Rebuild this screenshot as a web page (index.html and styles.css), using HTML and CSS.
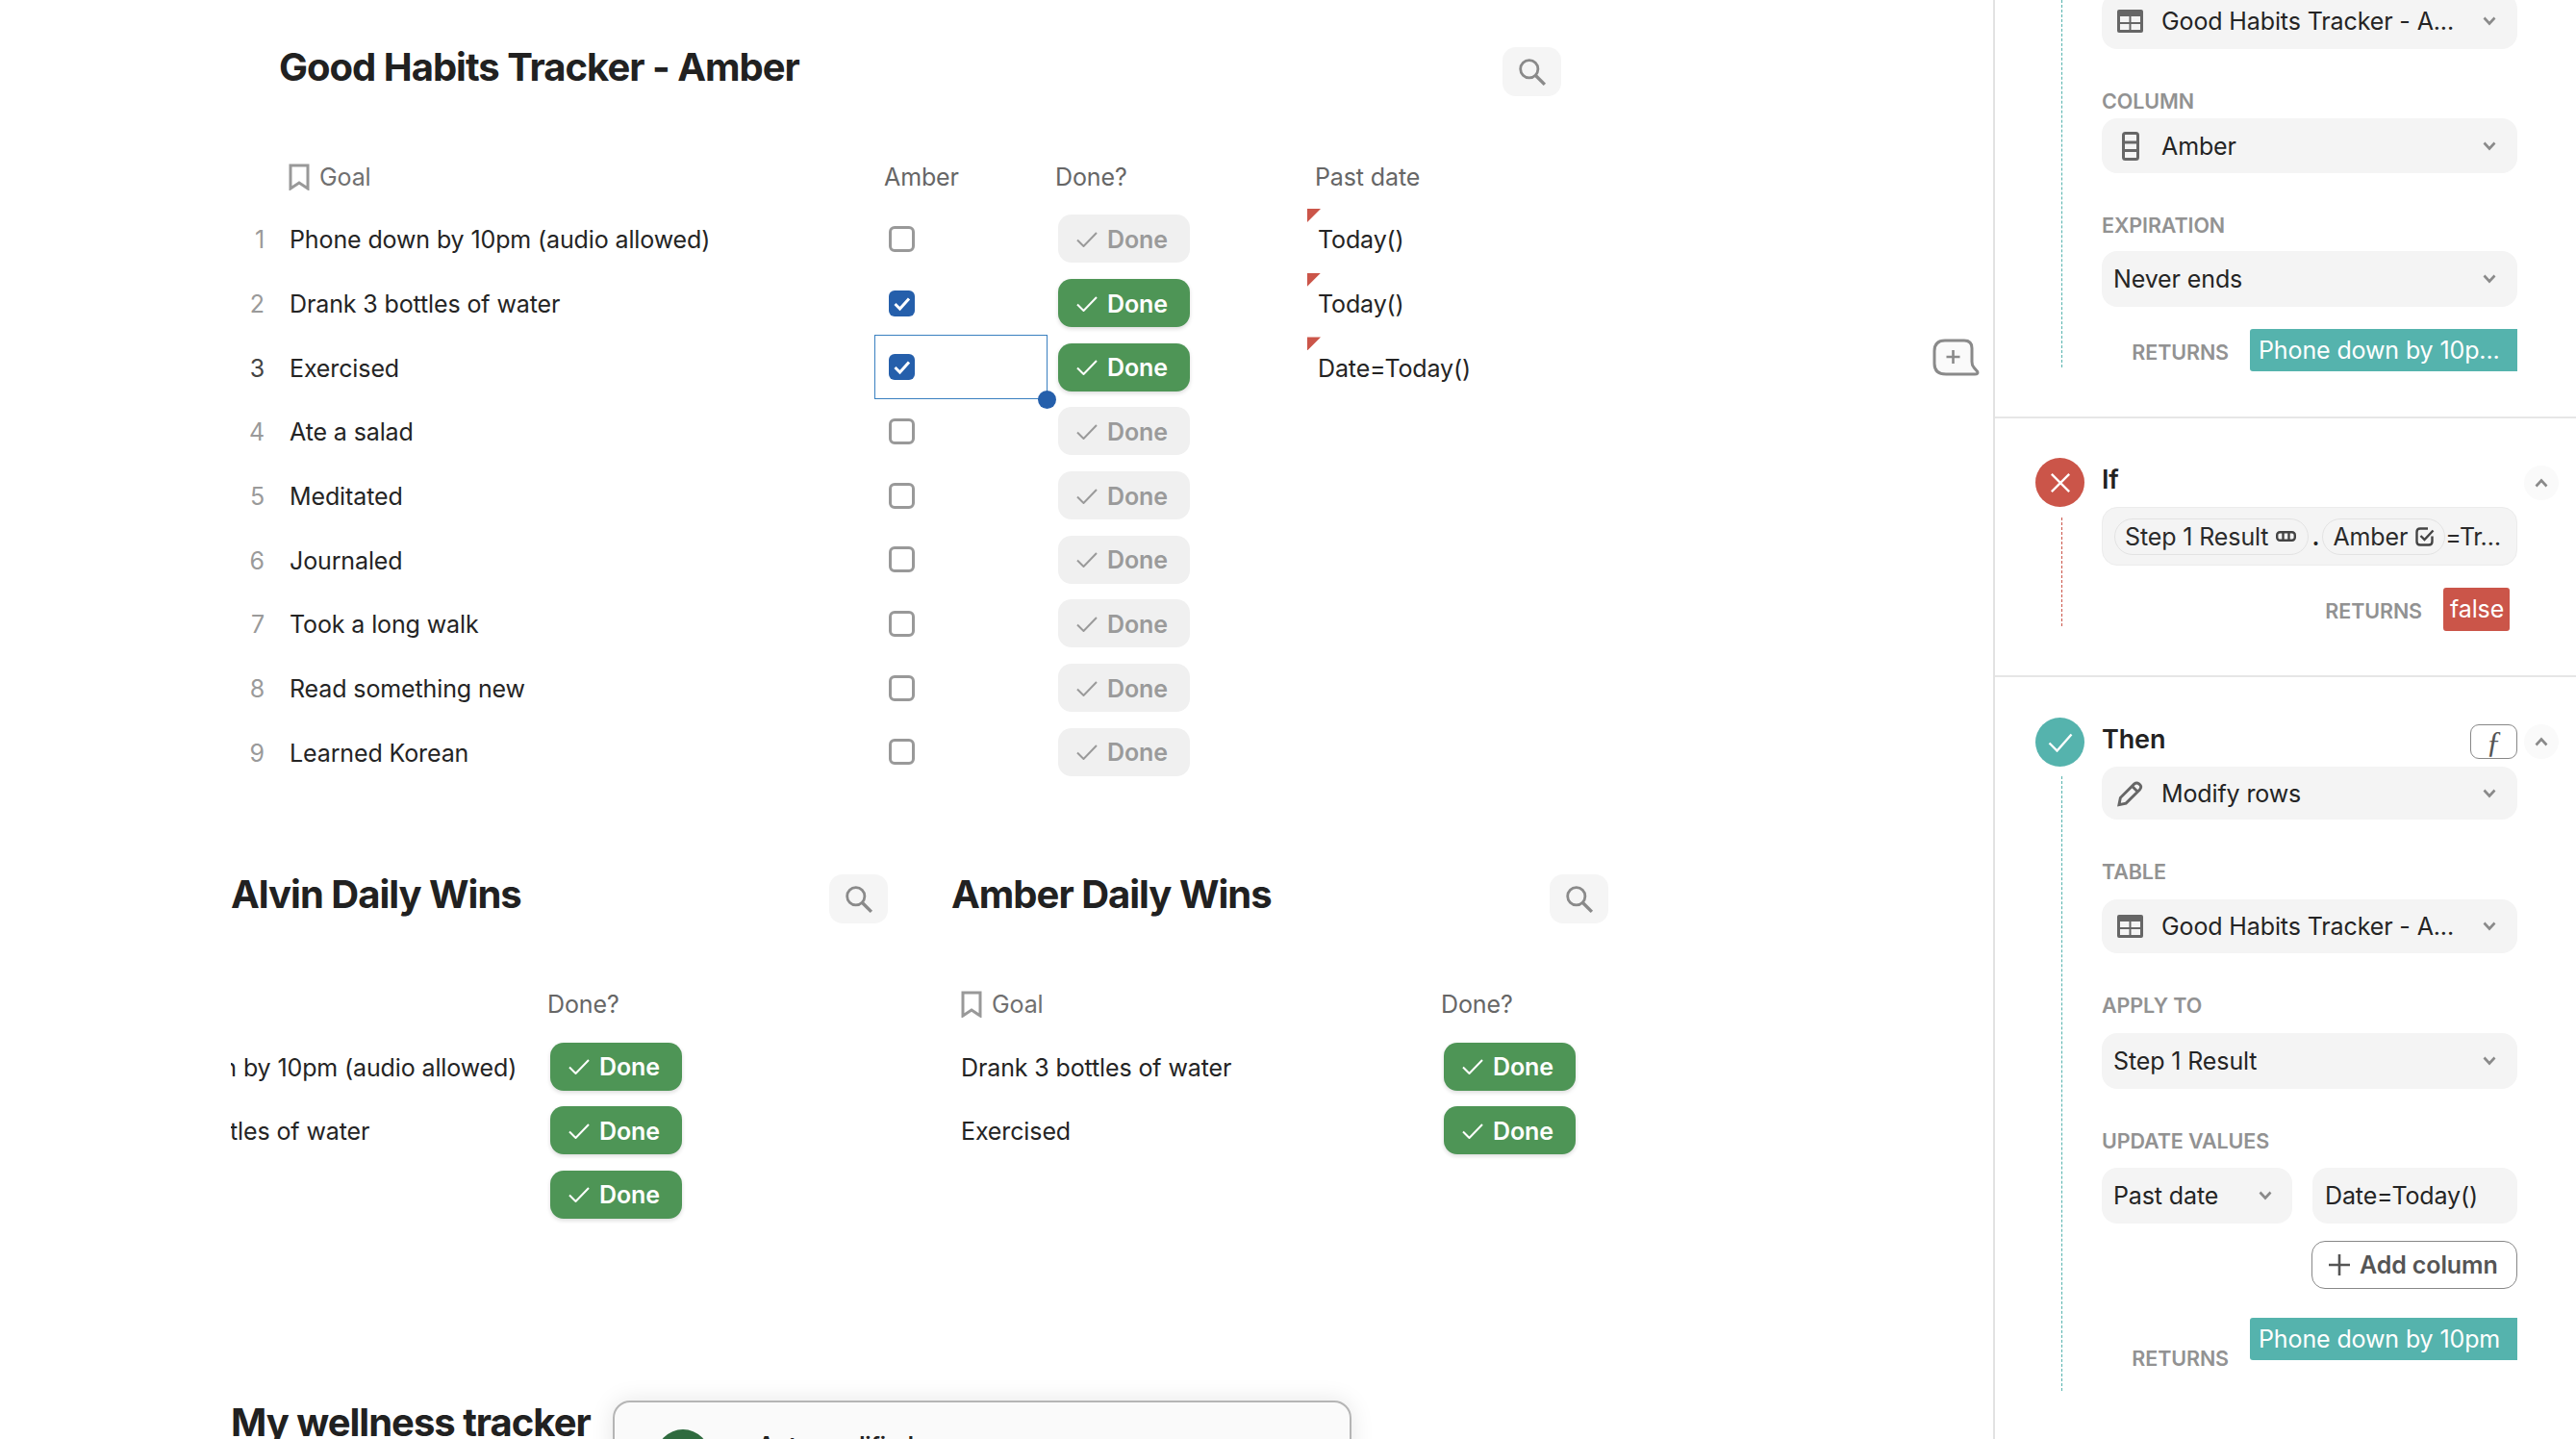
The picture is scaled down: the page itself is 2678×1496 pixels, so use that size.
FILE: index.html
```html
<!DOCTYPE html>
<html lang="en">
<head>
<meta charset="utf-8">
<title>Good Habits Tracker</title>
<link rel="stylesheet" href="styles.css">
</head>
<body>
<svg class="defs" width="0" height="0" aria-hidden="true">
  <symbol id="i-check" viewBox="0 0 22 16"><path d="M1 8.5 L7.5 15 L21 1" fill="none" stroke="currentColor" stroke-width="2"/></symbol>
  <symbol id="i-search" viewBox="0 0 28 28"><circle cx="11" cy="11" r="8.500" fill="none" stroke="currentColor" stroke-width="2.600"/><path d="M17 17 L26 26" stroke="currentColor" stroke-width="3.200"/></symbol>
  <symbol id="i-bookmark" viewBox="0 0 22 28"><path d="M2 2 H20 V26 L11 20 L2 26 Z" fill="none" stroke="currentColor" stroke-width="3"/></symbol>
  <symbol id="i-box" viewBox="0 0 27 27"><path d="M6.500 14 L11.500 19 L21 8.500" fill="none" stroke="#fff" stroke-width="3"/></symbol>
  <symbol id="i-chev" viewBox="0 0 14 10"><path d="M1.500 1.500 L7 7.500 L12.500 1.500" fill="none" stroke="currentColor" stroke-width="2.600"/></symbol>
  <symbol id="i-up" viewBox="0 0 14 10"><path d="M1.500 8.500 L7 2.500 L12.500 8.500" fill="none" stroke="currentColor" stroke-width="2.600"/></symbol>
  <symbol id="i-table" viewBox="0 0 27 24"><rect x="0" y="0" width="27" height="24" rx="2" fill="currentColor"/><rect x="3" y="7" width="9.500" height="6" fill="#f4f4f4"/><rect x="14.500" y="7" width="9.500" height="6" fill="#f4f4f4"/><rect x="3" y="15" width="9.500" height="6" fill="#f4f4f4"/><rect x="14.500" y="15" width="9.500" height="6" fill="#f4f4f4"/></symbol>
  <symbol id="i-column" viewBox="0 0 18 30"><rect x="1.500" y="1.500" width="15" height="27" rx="2" fill="none" stroke="currentColor" stroke-width="3"/><path d="M1.500 11 H16.500 M1.500 19.500 H16.500" stroke="currentColor" stroke-width="3"/></symbol>
  <symbol id="i-pencil" viewBox="0 0 28 28"><path d="M2 26 L3.500 18.500 L18.500 3.500 Q21 1.500 23.500 3.500 L25 5 Q26.500 7 24.500 9.500 L9.500 24.500 Z M16 6 L22 12" fill="none" stroke="currentColor" stroke-width="3"/></symbol>
  <symbol id="i-link" viewBox="0 0 21 11"><rect x="1.200" y="1.200" width="18.600" height="8.600" rx="3" fill="none" stroke="currentColor" stroke-width="2.400"/><path d="M7.500 1 V10 M13.500 1 V10" stroke="currentColor" stroke-width="2.400"/></symbol>
  <symbol id="i-checkbox" viewBox="0 0 20 20"><path d="M17.500 9.500 V15 Q17.500 18.500 14 18.500 H5 Q1.500 18.500 1.500 15 V5 Q1.500 1.500 5 1.500 H13" fill="none" stroke="currentColor" stroke-width="2.400"/><path d="M5.500 9 L9.500 13 L18.500 3.500" fill="none" stroke="currentColor" stroke-width="2.400"/></symbol>
  <symbol id="i-x" viewBox="0 0 24 24"><path d="M2 2 L22 22 M22 2 L2 22" stroke="#fff" stroke-width="2.600"/></symbol>
  <symbol id="i-ok" viewBox="0 0 26 20"><path d="M1.500 10.500 L9.500 18.500 L24.500 1.500" fill="none" stroke="#fff" stroke-width="2.400"/></symbol>
  <symbol id="i-plus" viewBox="0 0 22 22"><path d="M11 0 V22 M0 11 H22" stroke="currentColor" stroke-width="2.600"/></symbol>
</svg>

<div class="app">
  <main class="main">
    <section class="block block-first">
      <div class="title-row title-row-indent">
        <h2 class="title">Good Habits Tracker - Amber</h2>
        <button class="search"><svg class="ic-search"><use href="#i-search"/></svg></button>
      </div>
      <div class="table table-habits">
        <div class="row row-head">
          <div></div>
          <div class="head head-goal"><svg class="ic-bookmark"><use href="#i-bookmark"/></svg>Goal</div>
          <div class="head head-amber">Amber</div>
          <div class="head head-done">Done?</div>
          <div class="head head-past">Past date</div>
        </div>
        <div class="row">
          <div class="num">1</div><div class="goal">Phone down by 10pm (audio allowed)</div>
          <div class="tick"><span class="box"></span></div>
          <div><span class="done done-off"><svg class="ic-check"><use href="#i-check"/></svg>Done</span></div>
          <div class="past">Today()</div>
        </div>
        <div class="row">
          <div class="num">2</div><div class="goal">Drank 3 bottles of water</div>
          <div class="tick"><span class="box box-on"><svg class="ic-box"><use href="#i-box"/></svg></span></div>
          <div><span class="done"><svg class="ic-check"><use href="#i-check"/></svg>Done</span></div>
          <div class="past">Today()</div>
        </div>
        <div class="row">
          <div class="num num-active">3</div><div class="goal">Exercised</div>
          <div class="tick tick-selected"><span class="box box-on"><svg class="ic-box"><use href="#i-box"/></svg></span><span class="handle"></span></div>
          <div><span class="done"><svg class="ic-check"><use href="#i-check"/></svg>Done</span></div>
          <div class="past">Date=Today()</div>
          <svg class="comment-add" viewBox="0 0 49 39"><path d="M13 2 H33 Q41 2 41 10 V24 Q41 28 43 30 L46.500 34 Q48 37 44 37 H14 Q2 37 2 26 V13 Q2 2 13 2 Z" fill="#fafafa" stroke="#8a8a8a" stroke-width="3"/><path d="M21.500 12 V26 M14.500 19 H28.500" stroke="#8a8a8a" stroke-width="2.600"/></svg>
        </div>
        <div class="row">
          <div class="num">4</div><div class="goal">Ate a salad</div>
          <div class="tick"><span class="box"></span></div>
          <div><span class="done done-off"><svg class="ic-check"><use href="#i-check"/></svg>Done</span></div>
          <div></div>
        </div>
        <div class="row">
          <div class="num">5</div><div class="goal">Meditated</div>
          <div class="tick"><span class="box"></span></div>
          <div><span class="done done-off"><svg class="ic-check"><use href="#i-check"/></svg>Done</span></div>
          <div></div>
        </div>
        <div class="row">
          <div class="num">6</div><div class="goal">Journaled</div>
          <div class="tick"><span class="box"></span></div>
          <div><span class="done done-off"><svg class="ic-check"><use href="#i-check"/></svg>Done</span></div>
          <div></div>
        </div>
        <div class="row">
          <div class="num">7</div><div class="goal">Took a long walk</div>
          <div class="tick"><span class="box"></span></div>
          <div><span class="done done-off"><svg class="ic-check"><use href="#i-check"/></svg>Done</span></div>
          <div></div>
        </div>
        <div class="row">
          <div class="num">8</div><div class="goal">Read something new</div>
          <div class="tick"><span class="box"></span></div>
          <div><span class="done done-off"><svg class="ic-check"><use href="#i-check"/></svg>Done</span></div>
          <div></div>
        </div>
        <div class="row">
          <div class="num">9</div><div class="goal">Learned Korean</div>
          <div class="tick"><span class="box"></span></div>
          <div><span class="done done-off"><svg class="ic-check"><use href="#i-check"/></svg>Done</span></div>
          <div></div>
        </div>
      </div>
    </section>

    <div class="pair">
      <section class="block block-half">
        <div class="title-row">
          <h2 class="title">Alvin Daily Wins</h2>
          <button class="search"><svg class="ic-search"><use href="#i-search"/></svg></button>
        </div>
        <div class="table table-alvin">
          <div class="row row-head">
            <div></div>
            <div class="head head-done">Done?</div>
          </div>
          <div class="row">
            <div class="goal goal-clip"><span class="scrolled">Phone down by 10pm (audio allowed)</span></div>
            <div><span class="done"><svg class="ic-check"><use href="#i-check"/></svg>Done</span></div>
          </div>
          <div class="row">
            <div class="goal goal-clip"><span class="scrolled scrolled-short">Drank 3 bottles of water</span></div>
            <div><span class="done"><svg class="ic-check"><use href="#i-check"/></svg>Done</span></div>
          </div>
          <div class="row">
            <div class="goal goal-clip"></div>
            <div><span class="done"><svg class="ic-check"><use href="#i-check"/></svg>Done</span></div>
          </div>
        </div>
      </section>

      <section class="block block-half">
        <div class="title-row">
          <h2 class="title">Amber Daily Wins</h2>
          <button class="search"><svg class="ic-search"><use href="#i-search"/></svg></button>
        </div>
        <div class="table table-amber">
          <div class="row row-head">
            <div class="head head-goal head-goal-amber"><svg class="ic-bookmark"><use href="#i-bookmark"/></svg>Goal</div>
            <div class="head head-done">Done?</div>
          </div>
          <div class="row">
            <div class="goal goal-amber">Drank 3 bottles of water</div>
            <div><span class="done"><svg class="ic-check"><use href="#i-check"/></svg>Done</span></div>
          </div>
          <div class="row">
            <div class="goal goal-amber">Exercised</div>
            <div><span class="done"><svg class="ic-check"><use href="#i-check"/></svg>Done</span></div>
          </div>
        </div>
      </section>
    </div>

    <section class="block block-last">
      <div class="title-row">
        <h2 class="title">My wellness tracker</h2>
      </div>
    </section>

    <aside class="toast">
      <span class="toast-dot"></span>
      <span class="toast-text">Auto modified</span>
    </aside>
  </main>

  <aside class="panel">
    <section class="step step-first">
      <div class="rail rail-first"><span class="line line-teal"></span></div>
      <div class="body">
        <div class="select select-top"><svg class="ic-table"><use href="#i-table"/></svg><span class="select-text">Good Habits Tracker - A...</span><svg class="ic-chev"><use href="#i-chev"/></svg></div>
        <div class="label label-tight">COLUMN</div>
        <div class="select select-column"><span class="ic-slot"><svg class="ic-column"><use href="#i-column"/></svg></span><span class="select-text">Amber</span><svg class="ic-chev"><use href="#i-chev"/></svg></div>
        <div class="label">EXPIRATION</div>
        <div class="select"><span class="select-text">Never ends</span><svg class="ic-chev"><use href="#i-chev"/></svg></div>
        <div class="returns">
          <span class="returns-label">RETURNS</span>
          <span class="result result-teal">Phone down by 10p...</span>
        </div>
      </div>
    </section>

    <section class="step step-if">
      <div class="rail">
        <span class="badge badge-red"><svg class="ic-x"><use href="#i-x"/></svg></span>
        <span class="line line-red"></span>
      </div>
      <div class="body">
        <div class="step-head">
          <h3 class="step-title">If</h3>
          <span class="collapse"><svg class="ic-chev"><use href="#i-up"/></svg></span>
        </div>
        <div class="formula">
          <span class="chip">Step 1 Result<svg class="ic-link"><use href="#i-link"/></svg></span>
          <span class="dot">.</span>
          <span class="chip">Amber<svg class="ic-checkbox"><use href="#i-checkbox"/></svg></span>
          <span class="rest">=Tr…</span>
        </div>
        <div class="returns returns-false">
          <span class="returns-label">RETURNS</span>
          <span class="result result-red">false</span>
        </div>
      </div>
    </section>

    <section class="step step-last">
      <div class="rail rail-then">
        <span class="badge badge-teal"><svg class="ic-ok"><use href="#i-ok"/></svg></span>
        <span class="line line-teal line-then"></span>
      </div>
      <div class="body">
        <div class="step-head">
          <h3 class="step-title">Then</h3>
          <span class="fx">ƒ</span>
          <span class="collapse collapse-then"><svg class="ic-chev"><use href="#i-up"/></svg></span>
        </div>
        <div class="select select-modify"><svg class="ic-pencil"><use href="#i-pencil"/></svg><span class="select-text">Modify rows</span><svg class="ic-chev"><use href="#i-chev"/></svg></div>
        <div class="label label-wide">TABLE</div>
        <div class="select select-short"><svg class="ic-table"><use href="#i-table"/></svg><span class="select-text">Good Habits Tracker - A...</span><svg class="ic-chev"><use href="#i-chev"/></svg></div>
        <div class="label label-wide">APPLY TO</div>
        <div class="select"><span class="select-text">Step 1 Result</span><svg class="ic-chev"><use href="#i-chev"/></svg></div>
        <div class="label label-update">UPDATE VALUES</div>
        <div class="pair-fields">
          <div class="select select-past"><span class="select-text">Past date</span><svg class="ic-chev"><use href="#i-chev"/></svg></div>
          <div class="field">Date=Today()</div>
        </div>
        <button class="add"><svg class="ic-plus"><use href="#i-plus"/></svg>Add column</button>
        <div class="returns returns-last">
          <span class="returns-label">RETURNS</span>
          <span class="result result-teal">Phone down by 10pm</span>
        </div>
      </div>
    </section>
  </aside>
</div>
</body>
</html>
```

FILE: styles.css
```css
* { box-sizing: border-box; }
html, body { margin: 0; height: 1496px; overflow: hidden; background: #fff; }
body { font-family: Inter, "Noto Sans", sans-serif; font-size: 25px; letter-spacing: -0.12px; color: #222; }
.defs { position: absolute; }
button { font: inherit; letter-spacing: inherit; margin: 0; padding: 0; border: 0; }
h2, h3 { margin: 0; }

.app { display: flex; height: 1496px; overflow: hidden; }
.main { position: relative; width: 2072px; flex: none; padding-left: 240px; }

/* section heads */
.title-row { display: flex; justify-content: space-between; align-items: flex-start; height: 153px; }
.title-row-indent { padding-left: 50px; }
.title { margin-top: 46px; font-size: 40px; line-height: 48px; font-weight: 700; letter-spacing: -1px; color: #212121; }
.search { margin-top: 49px; width: 61px; height: 51px; border-radius: 14px; background: #f5f5f5; display: flex; align-items: center; justify-content: center; color: #8a8a8a; }
.ic-search { width: 30px; height: 30px; }

.block-first { width: 1383px; }
.pair { display: flex; gap: 66px; margin-top: 45px; }
.block-half { width: 683px; }
.block-last { margin-top: 134px; }

/* tables */
.row { display: grid; height: 66.7px; align-items: center; position: relative; }
.row-head { height: 62px; }
.table-habits .row { grid-template-columns: 60px 609px 180px 270px 1fr; }
.table-alvin .row { grid-template-columns: 321px 1fr; }
.table-amber .row { grid-template-columns: 501px 1fr; }

.head { color: #666; display: flex; align-items: center; }
.head-goal { gap: 10px; color: #707070; }
.head-goal-amber { padding-left: 10px; }
.head-amber { padding-left: 10px; }
.head-done { padding-left: 8px; }
.head-past { padding-left: 8px; }
.ic-bookmark { width: 22px; height: 28px; color: #999; }

.num { text-align: right; padding: 2px 25px 0 0; color: #9a9a9a; }
.num-active { color: #444; }
.goal { white-space: nowrap; color: #242424; padding-top: 2px; padding-left: 1px; }
.goal-clip { overflow: hidden; padding-left: 0; }
.scrolled { display: block; margin-left: -140px; }
.scrolled-short { margin-left: -137px; }
.goal-amber { padding-left: 10px; }

.tick { height: 100%; display: flex; align-items: center; padding-left: 15px; position: relative; }
.tick-selected { outline: 1.5px solid #3a80c0; outline-offset: -1.5px; }
.handle { position: absolute; right: -9px; bottom: -10px; width: 19px; height: 19px; border-radius: 50%; background: #255fab; z-index: 2; }
.box { width: 27px; height: 27px; border-radius: 6px; border: 3px solid #999; display: block; }
.box-on { border: 0; background: #255fab; }
.ic-box { width: 27px; height: 27px; display: block; }

.done { margin-left: 11px; display: flex; align-items: center; gap: 10px; width: 137px; height: 50px; padding: 1px 0 0 19px; border-radius: 14px; background: #4e9556; color: #fff; font-weight: 600; box-shadow: 0 2px 4px rgba(0,0,0,.14); }
.done-off { background: #f0f0f0; color: #9a9a9a; box-shadow: none; }
.ic-check { width: 22px; height: 16px; flex: none; }

.past { height: 100%; display: flex; align-items: center; padding: 2px 0 0 11px; position: relative; color: #242424; white-space: nowrap; }
.past::before { content: ""; position: absolute; left: 0; top: 2px; width: 14px; height: 14px; background: #cb5549; clip-path: polygon(0 0, 100% 0, 0 100%); }
.comment-add { position: absolute; left: 1769px; top: 4px; width: 49px; height: 39px; }

/* toast */
.toast { position: absolute; left: 637px; top: 1456px; width: 768px; height: 200px; padding: 28px 0 0 43px; display: flex; gap: 50px; background: #fafafa; border: 2px solid #b5b5b5; border-radius: 18px; box-shadow: 0 0 24px rgba(0,0,0,.1); }
.toast-dot { width: 56px; height: 56px; border-radius: 50%; background: #2f6b3f; flex: none; }
.toast-text { font-size: 24px; font-weight: 600; line-height: 30px; margin-top: 2px; }

/* side panel */
.panel { flex: 1; border-left: 2px solid #e2e2e2; }
.step { display: flex; border-bottom: 2px solid #e6e6e6; }
.step-last { border-bottom: 0; }
.rail { width: 111px; flex: none; padding: 41px 0 51px 42px; display: flex; flex-direction: column; }
.rail-first { padding-top: 0; }
.rail-then { padding-top: 42px; padding-bottom: 0; }
.badge { width: 51px; height: 51px; border-radius: 50%; display: flex; align-items: center; justify-content: center; flex: none; }
.badge-red { background: #cb5549; }
.badge-teal { background: #55b3ad; }
.ic-x { width: 22px; height: 22px; }
.ic-ok { width: 26px; height: 20px; }
.line { flex: 1; margin-left: 27px; width: 0; border-left: 1px dashed; }
.line-teal { border-color: #55b3ad; }
.line-red { border-color: #cb5549; margin-top: 11px; }
.line-then { margin-top: 10px; flex: none; height: 639px; }

.body { width: 432px; flex: none; position: relative; }
.step-first .body { margin-top: -7px; padding-bottom: 47px; }
.step-if .body { padding: 41px 0 46px; }
.step-last .body { padding-top: 42px; }

.select { display: flex; align-items: center; height: 58px; padding: 0 22px 0 12px; border-radius: 16px; background: #f4f4f4; }
.select-column { height: 57px; }
.select-short { height: 56px; }
.select-modify { height: 55px; }
.select-text { flex: 1; white-space: nowrap; color: #242424; }
.ic-table { width: 27px; height: 24px; margin: 0 19px 0 4px; color: #666; flex: none; }
.ic-pencil { width: 27px; height: 28px; margin: 0 19px 0 4px; color: #666; flex: none; }
.ic-slot { width: 50px; display: flex; padding-left: 9px; flex: none; }
.ic-column { width: 18px; height: 30px; color: #666; }
.ic-chev { width: 14px; height: 10px; color: #8a8a8a; flex: none; }

.label { height: 26px; line-height: 26px; margin: 41px 0 14px; font-size: 21.5px; font-weight: 600; letter-spacing: -0.1px; color: #929292; }
.label-tight { margin-bottom: 5px; }
.label-wide { margin-bottom: 16px; }
.label-update { margin-bottom: 15px; }

.returns { display: flex; align-items: center; justify-content: flex-end; gap: 22px; margin-top: 23px; }
.returns-label { font-size: 21.5px; font-weight: 600; letter-spacing: -0.1px; line-height: 26px; color: #929292; padding-top: 3px; }
.result { height: 44px; line-height: 44px; padding: 0 0 0 9px; color: #fff; border-radius: 3px 0 0 3px; white-space: nowrap; }
.result-teal { width: 278px; background: #55b3ad; }
.result-red { width: 69px; height: 45px; line-height: 45px; padding-left: 7px; background: #cb5549; border-radius: 3px; }
.returns-false { margin-right: 8px; }
.returns-last { align-items: flex-start; margin-top: 30px; }
.returns-last .returns-label { margin-top: 26px; }

.step-head { display: flex; align-items: flex-start; height: 51px; }
.step-title { flex: 1; margin-top: 6px; font-size: 27px; line-height: 34px; font-weight: 600; color: #222; }
.collapse { margin: 8px -43px 0 7px; width: 36px; height: 36px; border-radius: 50%; background: #fafafa; display: flex; align-items: center; justify-content: center; }
.collapse-then { margin-top: 7px; }
.fx { margin-top: 7px; width: 49px; height: 36px; border: 1.5px solid #888; border-radius: 9px; display: flex; align-items: center; justify-content: center; font-family: "Liberation Serif", serif; font-style: italic; font-size: 32px; color: #555; }

.formula { display: flex; align-items: center; height: 61px; padding-left: 12px; border-radius: 16px; background: #f4f4f4; border: 1px solid #ececec; white-space: nowrap; overflow: hidden; }
.chip { display: flex; align-items: center; gap: 8px; height: 38px; padding: 0 10px; border: 1.5px solid #e2e2e2; border-radius: 19px; color: #2a2a2a; }
.chip:first-child { padding-right: 12px; }
.dot { width: 14px; text-align: center; font-weight: 600; }
.rest { letter-spacing: -0.6px; color: #2a2a2a; }
.ic-link { width: 21px; height: 11px; color: #444; flex: none; }
.ic-checkbox { width: 20px; height: 20px; color: #444; flex: none; }

.pair-fields { display: flex; gap: 21px; }
.select-past { width: 198px; padding-right: 21px; }
.field { flex: 1; height: 58px; line-height: 58px; padding-left: 13px; border-radius: 16px; background: #f4f4f4; color: #242424; }
.add { display: flex; align-items: center; gap: 10px; width: 214px; height: 50px; margin: 18px 0 0 auto; padding-left: 17px; background: #fff; border: 1.5px solid #888; border-radius: 14px; font-weight: 600; color: #555; }
.ic-plus { width: 22px; height: 22px; flex: none; }
```
